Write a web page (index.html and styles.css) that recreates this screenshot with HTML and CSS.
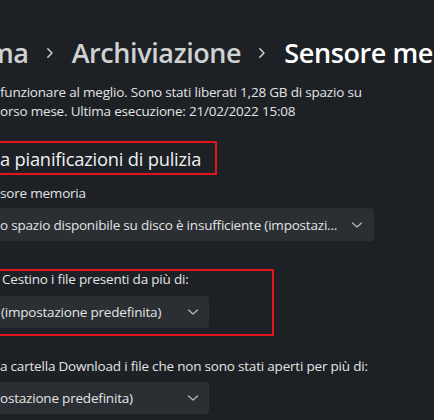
FILE: index.html
```html
<!DOCTYPE html>
<html lang="it">
<head>
<meta charset="utf-8">
<link rel="stylesheet" href="styles.css">
</head>
<body>
<div class="page">
  <nav class="crumbs">
    <span class="crumb first">ma</span>
    <svg class="sep" width="8" height="12" viewBox="0 0 8 12"><path d="M1.8 1.8 L6 6 L1.8 10.2" fill="none" stroke="#cfd1d3" stroke-width="1.5" stroke-linecap="round" stroke-linejoin="round"/></svg>
    <span class="crumb">Archiviazione</span>
    <svg class="sep" width="8" height="12" viewBox="0 0 8 12"><path d="M1.8 1.8 L6 6 L1.8 10.2" fill="none" stroke="#cfd1d3" stroke-width="1.5" stroke-linecap="round" stroke-linejoin="round"/></svg>
    <span class="crumb current">Sensore memoria</span>
  </nav>

  <p class="desc">funzionare al meglio. Sono stati liberati 1,28 GB di spazio su<br>orso mese. Ultima esecuzione: 21/02/2022 15:08</p>

  <div class="mark mark-title">
    <h2 class="section">a pianificazioni di pulizia</h2>
  </div>

  <div class="field field-1">
    <div class="label">sore memoria</div>
    <div class="select select-wide">
      <span class="value">o spazio disponibile su disco è insufficiente (impostazi...</span>
      <svg class="chev" width="12" height="8" viewBox="0 0 12 8"><path d="M1.5 2 L6 6 L10.5 2" fill="none" stroke="#b9bcbf" stroke-width="1.2" stroke-linecap="round" stroke-linejoin="round"/></svg>
    </div>
  </div>

  <div class="mark mark-field">
    <div class="label label-in">Cestino i file presenti da più di:</div>
    <div class="select select-inner">
      <span class="value">(impostazione predefinita)</span>
      <svg class="chev" width="12" height="8" viewBox="0 0 12 8"><path d="M1.5 2 L6 6 L10.5 2" fill="none" stroke="#b9bcbf" stroke-width="1.2" stroke-linecap="round" stroke-linejoin="round"/></svg>
    </div>
  </div>

  <div class="field field-3">
    <div class="label">a cartella Download i file che non sono stati aperti per più di:</div>
    <div class="select select-narrow">
      <span class="value">ostazione predefinita)</span>
      <svg class="chev" width="12" height="8" viewBox="0 0 12 8"><path d="M1.5 2 L6 6 L10.5 2" fill="none" stroke="#b9bcbf" stroke-width="1.2" stroke-linecap="round" stroke-linejoin="round"/></svg>
    </div>
  </div>
</div>
</body>
</html>
```

FILE: styles.css
```css
html, body {
  margin: 0;
  padding: 0;
  background: #1d2125;
}
body {
  width: 434px;
  height: 420px;
  overflow: hidden;
  font-family: "Open Sans", "Noto Sans", sans-serif;
  color: #e4e5e6;
}
.page {
  display: flex;
  flex-direction: column;
  white-space: nowrap;
}
.crumbs {
  display: flex;
  align-items: center;
  height: 40px;
  margin-top: 32px;
  font-size: 27px;
  font-weight: 600;
  letter-spacing: -0.4px;
}
.crumbs > * {
  flex-shrink: 0;
}
.crumb {
  color: #cfd1d3;
}
.crumb.first {
  margin-left: -12px;
}
.crumb.current {
  color: #ffffff;
}
.sep {
  margin: 2px 18px 0 17px;
}
.desc {
  margin: 11px 0 0 0;
  font-size: 13.5px;
  line-height: 19px;
  color: #e2e3e4;
  letter-spacing: -0.2px;
}
.mark {
  border: 2px solid #e3141c;
  margin-left: -10px;
  box-sizing: border-box;
}
.mark-title {
  width: 227px;
  height: 34px;
  margin-top: 20px;
  padding-left: 8px;
  display: flex;
  align-items: center;
}
.section {
  margin: 0;
  font-size: 18.3px;
  font-weight: 400;
  color: #f0f1f2;
  letter-spacing: -0.2px;
}
.field {
  display: flex;
  flex-direction: column;
}
.label {
  font-size: 13.5px;
  line-height: 19px;
  color: #e2e3e4;
  letter-spacing: -0.2px;
}
.field-1 {
  margin-top: 9px;
}
.field-1 .select {
  margin-top: 5px;
}
.select {
  display: flex;
  align-items: center;
  justify-content: space-between;
  background: #2b2f33;
  border-radius: 4px;
  margin-left: -10px;
  box-sizing: border-box;
  padding-left: 10px;
  font-size: 13.5px;
  color: #e2e3e4;
  letter-spacing: -0.2px;
}
.select-wide {
  width: 384px;
  height: 33px;
  padding-right: 11px;
}
.select-narrow {
  width: 219px;
  height: 32px;
  padding-right: 10px;
}
.select-inner {
  width: 219px;
  height: 32px;
  padding-right: 10px;
  margin-top: 9px;
  margin-left: -12px;
  padding-left: 11px;
}
.mark-field {
  width: 284px;
  height: 67px;
  margin-top: 28px;
  padding: 0 0 0 10px;
}
.label-in {
  line-height: 16px;
  margin-left: 0;
}
.field-3 {
  margin-top: 21px;
}
.field-3 .select {
  margin-top: 6px;
}
```
